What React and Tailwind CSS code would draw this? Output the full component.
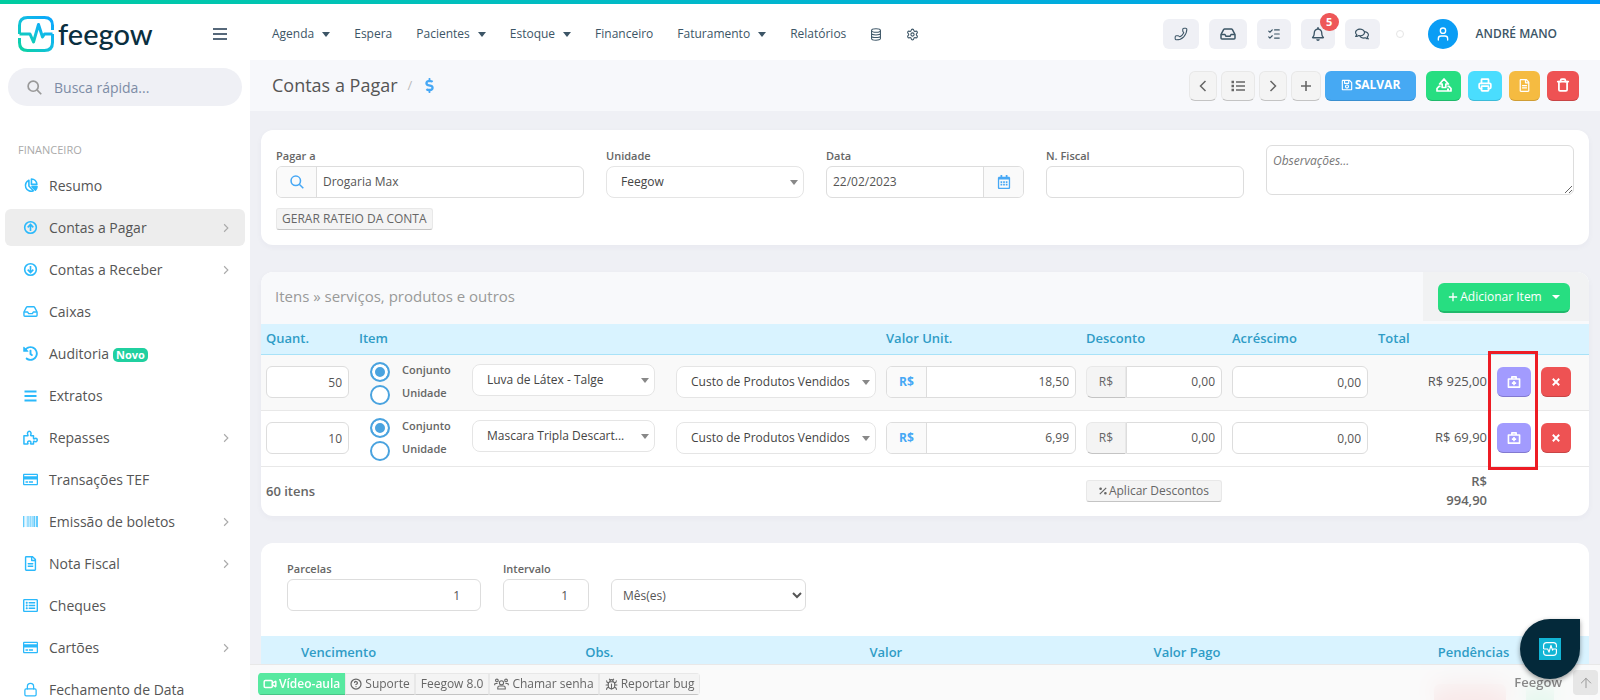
import { useState } from 'react';
import { Lock, Phone, User, Printer, Trash, Settings, Video, CircleQuestionMark, Bug, ArrowUp, ListChecks } from 'lucide-react';
import {
  FaRegCreditCard, FaRegFileAlt, FaRegListAlt, FaRegCalendarAlt, FaRegSave, FaRegBell, FaRegComments,
  FaHistory, FaBarcode, FaDollarSign,
} from 'react-icons/fa';

const InboxIcon = ({ className }) => (
  <svg viewBox="0 0 16 12" fill="none" stroke="currentColor" strokeWidth="1.5" strokeLinejoin="round" className={className}>
    <path d="M1 6.5 3.6 1.6Q4 1 4.6 1h6.8q.6 0 1 .6L15 6.5V10q0 1-1 1H2q-1 0-1-1Z" />
    <path d="M1.2 6.5H5l1 1.8h4l1-1.8h3.8" />
  </svg>
);

const PieIcon = ({ className }) => (
  <svg viewBox="0 0 16 16" fill="none" stroke="currentColor" strokeWidth="1.7" strokeLinejoin="round" className={className}>
    <path d="M6.3 2.4A6 6 0 1 0 11 13.6L6.3 8.6Z" />
    <path d="M9 1v5.8h5.8A5.9 5.9 0 0 0 9 1Z" />
    <path d="M9.6 9.2h5.4a6 6 0 0 1-1.8 3.7Z" fill="currentColor" />
  </svg>
);

const ArrowUpCircle = ({ className }) => (
  <svg viewBox="0 0 16 16" fill="none" stroke="currentColor" strokeWidth="1.7" className={className}>
    <circle cx="8" cy="8" r="6.2" />
    <path d="M8 11.8V5M5 7.800 8 4.800l3 3" />
  </svg>
);

const ArrowDownCircle = ({ className }) => <ArrowUpCircle className={`rotate-180 ${className}`} />;

const PuzzleIcon = ({ className }) => (
  <svg viewBox="0 0 16 16" fill="none" stroke="currentColor" strokeWidth="1.6" strokeLinejoin="round" className={className}>
    <path d="M1 6.200h3.600c.8 0 .9-.6.5-1.200C4.300 3.600 5 1.400 6.700 1.400S9 3.600 8.300 5c-.4.6-.2 1.200.5 1.200h2.400v2.600c0 .8.600.9 1.200.5 1.200-.8 2.800-.2 2.800 1.400s-1.600 2.200-2.800 1.400c-.6-.4-1.200-.2-1.200.5V15H8.600c-.6 0-.7-.5-.4-1 .6-1.100 0-2.200-1.500-2.200s-2.100 1.100-1.500 2.200c.3.5.1 1-.4 1H1Z" />
  </svg>
);

const LinesIcon = ({ className }) => (
  <svg viewBox="0 0 14 12" fill="none" stroke="currentColor" strokeWidth="2" className={className}>
    <path d="M0 1h14M0 6h14M0 11h14" />
  </svg>
);

const SmallLinesIcon = ({ className }) => (
  <svg viewBox="0 0 15 15" fill="none" stroke="currentColor" strokeWidth="1.8" className={className}>
    <path d="M1.500 3.500h12M1.500 8h12M1.500 12.500h12" />
  </svg>
);

const BulletListIcon = ({ className }) => (
  <svg viewBox="0 0 14 12" fill="none" stroke="currentColor" strokeWidth="1.5" className={className}>
    <path d="M5 2h9M5 6h9M5 10h9" />
    <path d="M.5 2h2.500M.5 6h2.500M.5 10h2.500" strokeWidth="2.5" />
  </svg>
);

const DatabaseIcon = ({ className }) => (
  <svg viewBox="0 0 12 14" fill="none" stroke="currentColor" strokeWidth="1.1" className={className}>
    <ellipse cx="6" cy="2.700" rx="4.800" ry="1.900" />
    <path d="M1.200 2.700v8.600c0 2.500 9.600 2.500 9.600 0V2.700M1.200 5.700c0 2.400 9.600 2.400 9.600 0M1.200 8.500c0 2.400 9.600 2.400 9.600 0" />
  </svg>
);

const SearchIcon = ({ className }) => (
  <svg viewBox="0 0 16 16" fill="none" stroke="currentColor" strokeWidth="1.8" className={className}>
    <circle cx="6.6" cy="6.6" r="5.4" />
    <path d="m10.6 10.6 4.6 4.6" />
  </svg>
);

const Chevron = ({ className }) => (
  <svg viewBox="0 0 8 12" fill="none" stroke="currentColor" strokeWidth="1.5" className={className}>
    <path d="m1.5 1 5 5-5 5" />
  </svg>
);

const PlusIcon = ({ className }) => (
  <svg viewBox="0 0 12 12" fill="none" stroke="currentColor" strokeWidth="1.6" className={className}>
    <path d="M6 1v10M1 6h10" />
  </svg>
);

const UploadIcon = ({ className }) => (
  <svg viewBox="0 0 16 14" fill="none" stroke="currentColor" strokeWidth="1.7" strokeLinejoin="round" className={className}>
    <path d="M6.2 9.5V6H3.6L8 1l4.4 5H9.8v3.5Z" />
    <path d="M4.6 8.4H3L1 10.5V13h14v-2.5l-2-2.1h-1.6M11 11.3h2" />
  </svg>
);

const KitIcon = ({ className }) => (
  <svg viewBox="0 0 16 14" fill="none" stroke="currentColor" strokeWidth="1.9" strokeLinejoin="round" className={className}>
    <path d="M1.5 3.5h13V13h-13ZM5.500 3.300V1h5v2.300M8 5.800v5M5.500 8.300h5" />
  </svg>
);

const CloseIcon = ({ className }) => (
  <svg viewBox="0 0 10 10" fill="none" stroke="currentColor" strokeWidth="2.4" className={className}>
    <path d="m1 1 8 8M9 1 1 9" />
  </svg>
);

const PercentIcon = ({ className }) => (
  <svg viewBox="0 0 10 10" fill="none" stroke="currentColor" strokeWidth="1.5" className={className}>
    <path d="M9 1 1 9" />
    <circle cx="2" cy="2.2" r=".9" fill="currentColor" />
    <circle cx="8" cy="7.8" r=".9" fill="currentColor" />
  </svg>
);

const GroupIcon = ({ className }) => (
  <svg viewBox="0 0 18 14" fill="none" stroke="currentColor" strokeWidth="1.3" className={className}>
    <circle cx="9" cy="5.500" r="2.500" />
    <circle cx="3.500" cy="2.700" r="1.600" />
    <circle cx="14.500" cy="2.700" r="1.600" />
    <path d="M4.500 13v-1.500q0-2.200 2.200-2.200h4.600q2.200 0 2.200 2.200V13ZM.8 8.500V7.800q0-1.500 1.500-1.500h2M17.200 8.500V7.800q0-1.500-1.500-1.500h-2" />
  </svg>
);

const PulseMark = ({ className, stroke, width }) => (
  <svg viewBox="0 0 36 36" fill="none" stroke={stroke} strokeWidth={width} strokeLinejoin="round" className={className}>
    <defs>
      <linearGradient id="pulse" x1="0" y1="1" x2="1" y2="0">
        <stop offset="0" stopColor="#0bd3a0" />
        <stop offset=".5" stopColor="#12bfe0" />
        <stop offset="1" stopColor="#0aa5ff" />
      </linearGradient>
    </defs>
    <path d="M1.5 18V9.5q0-8 8-8h17q8 0 8 8V14M34.5 18v8.500q0 8-8 8h-17q-8 0-8-8V22" />
    <path d="M1.500 18H12l3.500 8 5-17.500 4 12.500 2-3h8" />
  </svg>
);

const menu = [
  { label: 'Resumo', icon: PieIcon },
  { label: 'Contas a Pagar', icon: ArrowUpCircle, more: true, active: true },
  { label: 'Contas a Receber', icon: ArrowDownCircle, more: true },
  { label: 'Caixas', icon: InboxIcon },
  { label: 'Auditoria', icon: FaHistory, badge: 'Novo' },
  { label: 'Extratos', icon: SmallLinesIcon },
  { label: 'Repasses', icon: PuzzleIcon, more: true },
  { label: 'Transações TEF', icon: FaRegCreditCard },
  { label: 'Emissão de boletos', icon: FaBarcode, more: true },
  { label: 'Nota Fiscal', icon: FaRegFileAlt, more: true },
  { label: 'Cheques', icon: FaRegListAlt },
  { label: 'Cartões', icon: FaRegCreditCard, more: true },
  { label: 'Fechamento de Data', icon: Lock },
];

const navLinks = [
  { label: 'Agenda', caret: true },
  { label: 'Espera' },
  { label: 'Pacientes', caret: true },
  { label: 'Estoque', caret: true },
  { label: 'Financeiro' },
  { label: 'Faturamento', caret: true },
  { label: 'Relatórios' },
];

const initialItems = [
  { id: 1, qty: '50', product: 'Luva de Látex - Talge', price: '18,50', total: 'R$ 925,00' },
  { id: 2, qty: '10', product: 'Mascara Tripla Descart...', price: '6,99', total: 'R$ 69,90' },
];

const inputClass = 'h-8 w-full min-w-0 rounded-md border border-[#ddd] bg-white px-1.5 text-[12px] text-[#555] outline-none';
const labelClass = 'block text-[11px] leading-4 font-semibold text-[#666]';
const grayButton = 'flex items-center justify-center border border-[#e8e8e8] border-b-[#c4c4c4] bg-[#f4f4f4] text-[#666]';

const SelectBox = ({ label, value, id }) => (
  <div className="relative">
    <select id={id} aria-label={label} className="h-8 w-full appearance-none rounded-lg border border-[#e5e5e5] bg-white pr-5 pl-3.5 text-[12px] text-[#444] outline-none">
      <option>{value}</option>
    </select>
    <span className="pointer-events-none absolute top-3.5 right-1.5 border-x-4 border-t-[5px] border-x-transparent border-t-[#888]" />
  </div>
);

const Sidebar = () => (
  <aside className="flex w-[250px] shrink-0 flex-col overflow-hidden bg-white">
    <div className="flex h-[60px] shrink-0 items-center justify-between pr-[23px] pl-[18px]">
      <a href="#inicio" className="flex items-center gap-1">
        <PulseMark className="h-9 w-9" stroke="url(#pulse)" width="3" />
        <span className="font-[Lato] text-[29px] leading-8 font-medium text-[#0a2f3f]">feegow</span>
      </a>
      <button aria-label="Menu" className="text-[#56687a]"><LinesIcon className="h-3 w-3.5" /></button>
    </div>
    <label className="mx-2 mt-1 flex h-[38px] shrink-0 items-center gap-3 rounded-full bg-[#eff0f5] pl-[19px]">
      <SearchIcon className="h-[15px] w-[15px] shrink-0 text-[#999]" />
      <input placeholder="Busca rápida..." aria-label="Busca rápida" className="w-full min-w-0 bg-transparent text-[14px] outline-none placeholder:text-[#7d8ca5]" />
    </label>
    <h2 className="mt-9 pl-[18px] text-[11px] leading-4 text-[#aaa]">FINANCEIRO</h2>
    <nav className="mt-[9px] flex flex-col gap-[5px] px-[5px]">
      {menu.map(({ label, icon: Icon, more, active, badge }) => (
        <a key={label} href="#menu" className={`flex h-[37px] shrink-0 items-center rounded-md pl-[18px] pr-4 text-[14px] text-[#555] ${active ? 'bg-[#ededed]' : ''}`}>
          <Icon className="mr-[11px] h-[15px] w-[15px] text-[#2bb9fb]" />
          {label}
          {badge && <span className="mt-0.5 ml-1 rounded-[5px] bg-[#20d0a0] px-[3px] text-[11px] leading-[14px] font-bold text-white">{badge}</span>}
          {more && <Chevron className="ml-auto h-2.5 w-1.5 text-[#aaa]" />}
        </a>
      ))}
    </nav>
  </aside>
);

const Header = () => (
  <header className="flex h-14 shrink-0 items-center bg-white pt-1 pr-[43px] pl-[22px] text-[#3c5566]">
    <nav className="flex items-center gap-6 text-[12px]">
      {navLinks.map(({ label, caret }) => (
        <a key={label} href="#nav" className="flex items-center gap-2">
          {label}
          {caret && <span className="border-x-4 border-t-[5px] border-x-transparent border-t-[#3c5566]" />}
        </a>
      ))}
      <button aria-label="Dados"><DatabaseIcon className="h-[13px] w-3" /></button>
      <button aria-label="Configurações"><Settings className="h-[13px] w-[13px]" /></button>
    </nav>
    <div className="ml-auto flex items-center gap-2.5">
      <button aria-label="Telefone" className="flex h-[30px] w-9 items-center justify-center rounded-md bg-[#eff0f5]"><Phone strokeWidth={1.8} className="h-3.5 w-3.5 -scale-x-100" /></button>
      <button aria-label="Caixa" className="flex h-[30px] w-[38px] items-center justify-center rounded-md bg-[#eff0f5]"><InboxIcon className="h-3 w-4" /></button>
      <button aria-label="Tarefas" className="flex h-[30px] w-[34px] items-center justify-center rounded-md bg-[#eff0f5]"><ListChecks strokeWidth={2} className="h-3.5 w-3.5" /></button>
      <button aria-label="Notificações" className="relative flex h-[30px] w-[34px] items-center justify-center rounded-md bg-[#eff0f5]">
        <FaRegBell className="h-3.5 w-3.5" />
        <span className="absolute -top-1.5 -right-1 flex h-[18px] w-[19px] items-center justify-center rounded-full bg-[#ee5758] text-[11px] font-bold text-white">5</span>
      </button>
      <button aria-label="Mensagens" className="flex h-[30px] w-[35px] items-center justify-center rounded-md bg-[#eff0f5]"><FaRegComments className="h-3.5 w-3.5" /></button>
      <span className="mx-1.5 h-2 w-2 rounded-full border border-[#e5e5e5]" />
      <a href="#perfil" className="ml-2 flex items-center gap-[18px]">
        <span className="flex h-[30px] w-[30px] items-center justify-center rounded-full bg-[#0a9df5] text-white"><User strokeWidth={2} className="h-4 w-4" /></span>
        <span className="text-[12px] font-semibold">ANDRÉ MANO</span>
      </a>
    </div>
  </header>
);

const TitleBar = () => (
  <div className="flex h-[51px] shrink-0 items-center bg-[#f7f8fb] pr-[21px] pl-[22px]">
    <h1 className="text-[18px] text-[#555]">Contas a Pagar</h1>
    <span className="ml-2.5 text-[13px] text-[#bbb]">/</span>
    <FaDollarSign className="ml-2.5 h-[15px] w-[15px] text-[#47a8f5]" />
    <div className="ml-auto flex items-center gap-1">
      <button aria-label="Anterior" className={`h-[30px] w-7 rounded-md ${grayButton}`}><Chevron className="h-3 w-2 rotate-180" /></button>
      <button aria-label="Lista" className={`h-[30px] w-[34px] rounded-md ${grayButton}`}><BulletListIcon className="h-3 w-3.5" /></button>
      <button aria-label="Próximo" className={`h-[30px] w-7 rounded-md ${grayButton}`}><Chevron className="h-3 w-2" /></button>
      <button aria-label="Novo" className={`h-[30px] w-[30px] rounded-md ${grayButton}`}><PlusIcon className="h-3 w-3" /></button>
      <button className="flex h-[30px] w-[91px] items-center justify-center gap-0.5 rounded-md border-b border-[#3a8fd0] bg-[#46a9f3] text-[12px] font-bold text-white">
        <FaRegSave className="h-3 w-3" />SALVAR
      </button>
      <div className="ml-1.5 flex gap-[7px] text-white">
        <button aria-label="Exportar" className="flex h-[30px] w-[35px] items-center justify-center rounded-md border-b border-[#20b96b] bg-[#27de81]"><UploadIcon className="h-3.5 w-4" /></button>
        <button aria-label="Imprimir" className="flex h-[30px] w-[34px] items-center justify-center rounded-md border-b border-[#3cbbd8] bg-[#4addfe]"><Printer className="h-3.5 w-3.5" strokeWidth={3} /></button>
        <button aria-label="Documento" className="flex h-[30px] w-[31px] items-center justify-center rounded-md border-b border-[#cf9d35] bg-[#f5bb41]"><FaRegFileAlt className="h-[13px] w-[13px]" /></button>
        <button aria-label="Excluir" className="flex h-[30px] w-8 items-center justify-center rounded-md border-b border-[#c84445] bg-[#ee5253]"><Trash className="h-3.5 w-3.5" strokeWidth={3} /></button>
      </div>
    </div>
  </div>
);

const AccountCard = () => (
  <section className="grid grid-cols-12 gap-x-[22px] rounded-xl bg-white px-[15px] pt-[15px] pb-[15px] shadow-[0_2px_6px_rgba(60,60,100,0.04)]">
    <div className="col-span-3 pt-[3px]">
      <label htmlFor="pagar" className={labelClass}>Pagar a</label>
      <div className="mt-0.5 flex h-8 overflow-hidden rounded-md border border-[#ddd]">
        <span className="flex w-10 shrink-0 items-center justify-center border-r border-[#ddd] bg-[#fafafa] text-[#47a8f5]"><SearchIcon className="h-3.5 w-3.5" /></span>
        <input id="pagar" defaultValue="Drogaria Max" className="w-full min-w-0 px-1.5 text-[12px] text-[#555] outline-none" />
      </div>
      <button className={`mt-2.5 h-[22px] rounded-[3px] px-[5px] text-[12px] ${grayButton}`}>GERAR RATEIO DA CONTA</button>
    </div>
    <div className="col-span-2 pt-[3px]">
      <label htmlFor="unidade" className={`${labelClass} mb-0.5`}>Unidade</label>
      <SelectBox id="unidade" value="Feegow" />
    </div>
    <div className="col-span-2 pt-[3px]">
      <label htmlFor="data" className={labelClass}>Data</label>
      <div className="mt-0.5 flex h-8 overflow-hidden rounded-md border border-[#ddd]">
        <input id="data" defaultValue="22/02/2023" className="w-full min-w-0 px-1.5 text-[12px] text-[#555] outline-none" />
        <button aria-label="Calendário" className="flex w-10 shrink-0 items-center justify-center border-l border-[#ddd] bg-[#fafafa] text-[#47a8f5]"><FaRegCalendarAlt className="h-3.5 w-3.5" /></button>
      </div>
    </div>
    <div className="col-span-2 pt-[3px]">
      <label htmlFor="nf" className={`${labelClass} mb-0.5`}>N. Fiscal</label>
      <input id="nf" className={inputClass} />
    </div>
    <div className="col-span-3">
      <textarea aria-label="Observações" placeholder="Observações..." className="block h-[50px] w-full rounded-md border border-[#ddd] px-1.5 py-1.5 text-[12px] outline-none placeholder:text-[#777] placeholder:italic" />
    </div>
  </section>
);

const ItemRow = ({ item, striped }) => {
  const [mode, setMode] = useState('Conjunto');

  return (
    <tr className={`h-14 border-b border-[#e8e8e8] ${striped ? 'bg-[#f9f9f9]' : ''}`}>
      <td className="px-[5px]"><input aria-label="Quantidade" defaultValue={item.qty} className={`${inputClass} text-right`} /></td>
      <td className="pr-[11px] pl-4">
        <div className="flex items-center">
          <div className="flex w-[102px] shrink-0 flex-col gap-[3px] pt-0.5">
            {['Conjunto', 'Unidade'].map((option) => (
              <label key={option} className="flex h-5 items-center gap-3 text-[11px] leading-4 font-semibold text-[#666]">
                <input
                  type="radio"
                  name={`modo-${item.id}`}
                  checked={mode === option}
                  onChange={() => setMode(option)}
                  className="h-5 w-5 shrink-0 appearance-none rounded-full border-2 border-[#4aa3df] bg-white checked:bg-[#4aa3df] checked:shadow-[inset_0_0_0_3px_#fff]"
                />
                <span className="pb-1">{option}</span>
              </label>
            ))}
          </div>
          <div className="min-w-0 flex-1 pb-1"><SelectBox label="Produto" value={item.product} /></div>
        </div>
      </td>
      <td className="pr-[5px] pl-2.5"><SelectBox label="Categoria" value="Custo de Produtos Vendidos" /></td>
      <td className="px-[5px]">
        <div className="flex h-8 overflow-hidden rounded-md border border-[#ddd] bg-white">
          <span className="flex w-10 shrink-0 items-center justify-center border-r border-[#ddd] bg-[#fafafa] text-[12px] font-bold text-[#47a8f5]">R$</span>
          <input aria-label="Valor unitário" defaultValue={item.price} className="w-full min-w-0 px-1.5 text-right text-[12px] text-[#555] outline-none" />
        </div>
      </td>
      <td className="px-[5px]">
        <div className="flex h-8">
          <button className={`w-10 shrink-0 rounded-l-md text-[12px] ${grayButton}`}>R$</button>
          <input aria-label="Desconto" defaultValue="0,00" className="w-full min-w-0 rounded-r-md border border-[#ddd] bg-white px-1.5 text-right text-[12px] text-[#555] outline-none" />
        </div>
      </td>
      <td className="px-[5px]"><input aria-label="Acréscimo" defaultValue="0,00" className={`${inputClass} text-right`} /></td>
      <td className="px-[5px] text-right text-[13px] text-[#555]">{item.total}</td>
      <td className="px-[5px]">
        <button aria-label="Estoque" className="flex h-[30px] w-[34px] items-center justify-center rounded-md border-b border-[#8279d0] bg-[#a29bfe] text-white"><KitIcon className="h-3 w-3.5" /></button>
      </td>
      <td className="px-[5px]">
        <button aria-label="Remover" className="flex h-[30px] w-[30px] items-center justify-center rounded-md border-b border-[#c84445] bg-[#ee5253] text-white"><CloseIcon className="h-2 w-2" /></button>
      </td>
    </tr>
  );
};

const ItemsCard = () => (
  <section className="overflow-hidden rounded-xl bg-white shadow-[0_2px_6px_rgba(60,60,100,0.04)]">
    <div className="flex h-[52px] items-start bg-[#f8f9fb]">
      <h2 className="flex-1 pt-[13px] pl-3.5 text-[15px] leading-[22px] text-[#999]">Itens » serviços, produtos e outros</h2>
      <div className="bg-[#f1f2f3] pt-[11px] pr-[19px] pb-2 pl-[15px]">
        <button className="flex h-[30px] w-[132px] items-center justify-center rounded-md border-b-2 border-[#20b96b] bg-[#27de81] text-[12px] font-medium text-white">
          <PlusIcon className="mr-0.5 h-2.5 w-2.5" />Adicionar Item
          <span className="ml-2.5 border-x-4 border-t-4 border-x-transparent border-t-white" />
        </button>
      </div>
    </div>
    <div className="relative">
      <table className="w-full table-fixed border-collapse">
        <thead>
          <tr className="h-[30px] border-b border-[#a8e2f8] bg-[#d9f3ff] text-left text-[13px] text-[#2f9cc6]">
            <th className="w-[93px] px-[5px] font-semibold">Quant.</th>
            <th className="px-[5px] font-semibold">Item</th>
            <th className="w-[215px]" aria-label="Categoria" />
            <th className="w-[200px] px-[5px] font-semibold">Valor Unit.</th>
            <th className="w-[146px] px-[5px] font-semibold">Desconto</th>
            <th className="w-[146px] px-[5px] font-semibold">Acréscimo</th>
            <th className="w-[119px] px-[5px] font-semibold">Total</th>
            <th className="w-[44px]" aria-label="Estoque" />
            <th className="w-[53px]" aria-label="Remover" />
          </tr>
        </thead>
        <tbody>
          {initialItems.map((item, i) => (
            <ItemRow key={item.id} item={item} striped={i % 2 === 0} />
          ))}
        </tbody>
        <tfoot>
          <tr className="h-[50px] text-[13px] font-semibold text-[#666]">
            <td className="px-[5px]" colSpan={4}>60 itens</td>
            <td className="px-[5px]">
              <button className={`h-[22px] w-full gap-0.5 rounded-[3px] text-[12px] font-normal ${grayButton}`}><PercentIcon className="h-2 w-2" />Aplicar Descontos</button>
            </td>
            <td />
            <td className="px-[5px] text-right leading-[19px]">R$<br />994,90</td>
            <td colSpan={2} />
          </tr>
        </tfoot>
      </table>
      <div className="pointer-events-none absolute top-[27px] right-[51px] h-[119px] w-[50px] border-[3px] border-[#ed1c24]" />
    </div>
  </section>
);

const InstallmentsCard = () => (
  <section className="overflow-hidden rounded-t-xl bg-white">
    <div className="flex items-end gap-[22px] px-[26px] pt-[18px] pb-[25px]">
      <div className="w-[194px]">
        <label htmlFor="parcelas" className={`${labelClass} mb-0.5`}>Parcelas</label>
        <input id="parcelas" defaultValue="1" className={`${inputClass} pr-5 text-right`} />
      </div>
      <div className="w-[86px]">
        <label htmlFor="intervalo" className={`${labelClass} mb-0.5`}>Intervalo</label>
        <input id="intervalo" defaultValue="1" className={`${inputClass} pr-5 text-right`} />
      </div>
      <select aria-label="Período" className="h-8 w-[195px] rounded-md border border-[#ddd] bg-white px-[7px] text-[12px] text-[#555] outline-none">
        <option>Mês(es)</option>
      </select>
    </div>
    <table className="w-full table-fixed">
      <thead>
        <tr className="h-[34px] bg-[#d9f3ff] text-left text-[13px] text-[#2f9cc6]">
          <th className="w-[21.4%] pl-10 font-semibold">Vencimento</th>
          <th className="w-[21.4%] pl-10 font-semibold">Obs.</th>
          <th className="w-[21.4%] pl-10 font-semibold">Valor</th>
          <th className="w-[21.4%] pl-10 font-semibold">Valor Pago</th>
          <th className="pl-10 font-semibold">Pendências</th>
        </tr>
      </thead>
      <tbody>
        <tr className="h-20 align-top">
          <td colSpan={4} />
          <td>
            <div className="flex gap-5 pt-3.5 pl-9">
              <span className="h-[30px] w-[72px] rounded-md bg-[#ee5253]" />
              <span className="h-[30px] w-7 rounded-md bg-[#27de81]" />
            </div>
          </td>
        </tr>
      </tbody>
    </table>
  </section>
);

const FooterBar = () => (
  <footer className="absolute inset-x-0 bottom-0 flex h-9 items-center border-t border-[#e8e8e8] bg-[#f9f9f9]/90 pr-0.5 pl-2 backdrop-blur-md">
    <div className="mt-[3px] flex overflow-hidden rounded-[4px] text-[12px]">
      <button className="flex h-[22px] items-center gap-0.5 border-y border-t-[#58e9a0] border-b-[#48c486] bg-[#58e9a0] px-[5px] font-semibold text-white"><Video className="h-3.5 w-3.5" strokeWidth={2.5} />Vídeo-aula</button>
      <button className={`h-[22px] gap-[3px] px-1 ${grayButton}`}><CircleQuestionMark className="h-3 w-3" strokeWidth={2.5} />Suporte</button>
      <button className={`h-[22px] px-[5px] ${grayButton}`}>Feegow 8.0</button>
      <button className={`h-[22px] gap-[3px] px-1 ${grayButton}`}><GroupIcon className="h-3 w-[15px]" />Chamar senha</button>
      <button className={`h-[22px] gap-[3px] px-[5px] ${grayButton}`}><Bug className="h-[13px] w-[13px]" />Reportar bug</button>
    </div>
    <span className="ml-auto text-[13px] font-semibold text-[#888]">Feegow</span>
    <button aria-label="Voltar ao topo" className="ml-[11px] flex h-[25px] w-[25px] items-center justify-center rounded-[4px] bg-[#e6e6e6] text-[#999]"><ArrowUp className="h-4 w-4" strokeWidth={1.5} /></button>
  </footer>
);

const App = () => (
  <div className="flex h-screen flex-col overflow-hidden bg-[#eff0f5] font-['Open_Sans',sans-serif]">
    <div className="h-1 shrink-0 bg-linear-to-r from-[#00cca0] to-[#0098f8]" />
    <div className="flex min-h-0 flex-1">
      <Sidebar />
      <div className="relative flex min-w-0 flex-1 flex-col overflow-hidden">
        <Header />
        <TitleBar />
        <main className="flex min-h-0 flex-1 flex-col gap-[27px] overflow-hidden px-[11px] pt-[19px] *:shrink-0">
          <AccountCard />
          <ItemsCard />
          <InstallmentsCard />
        </main>
        <FooterBar />
        <button aria-label="Abrir chat" className="absolute right-5 bottom-[21px] flex h-[60px] w-[60px] items-center justify-center rounded-full rounded-tr-lg bg-[#04293a] shadow-[0_2px_5px_rgba(0,0,0,0.4)]">
          <span className="flex h-[22px] w-[22px] items-center justify-center bg-[#12b5d5]"><PulseMark className="h-3.5 w-3.5" stroke="#fff" width="3" /></span>
        </button>
      </div>
    </div>
  </div>
);

export default App;
